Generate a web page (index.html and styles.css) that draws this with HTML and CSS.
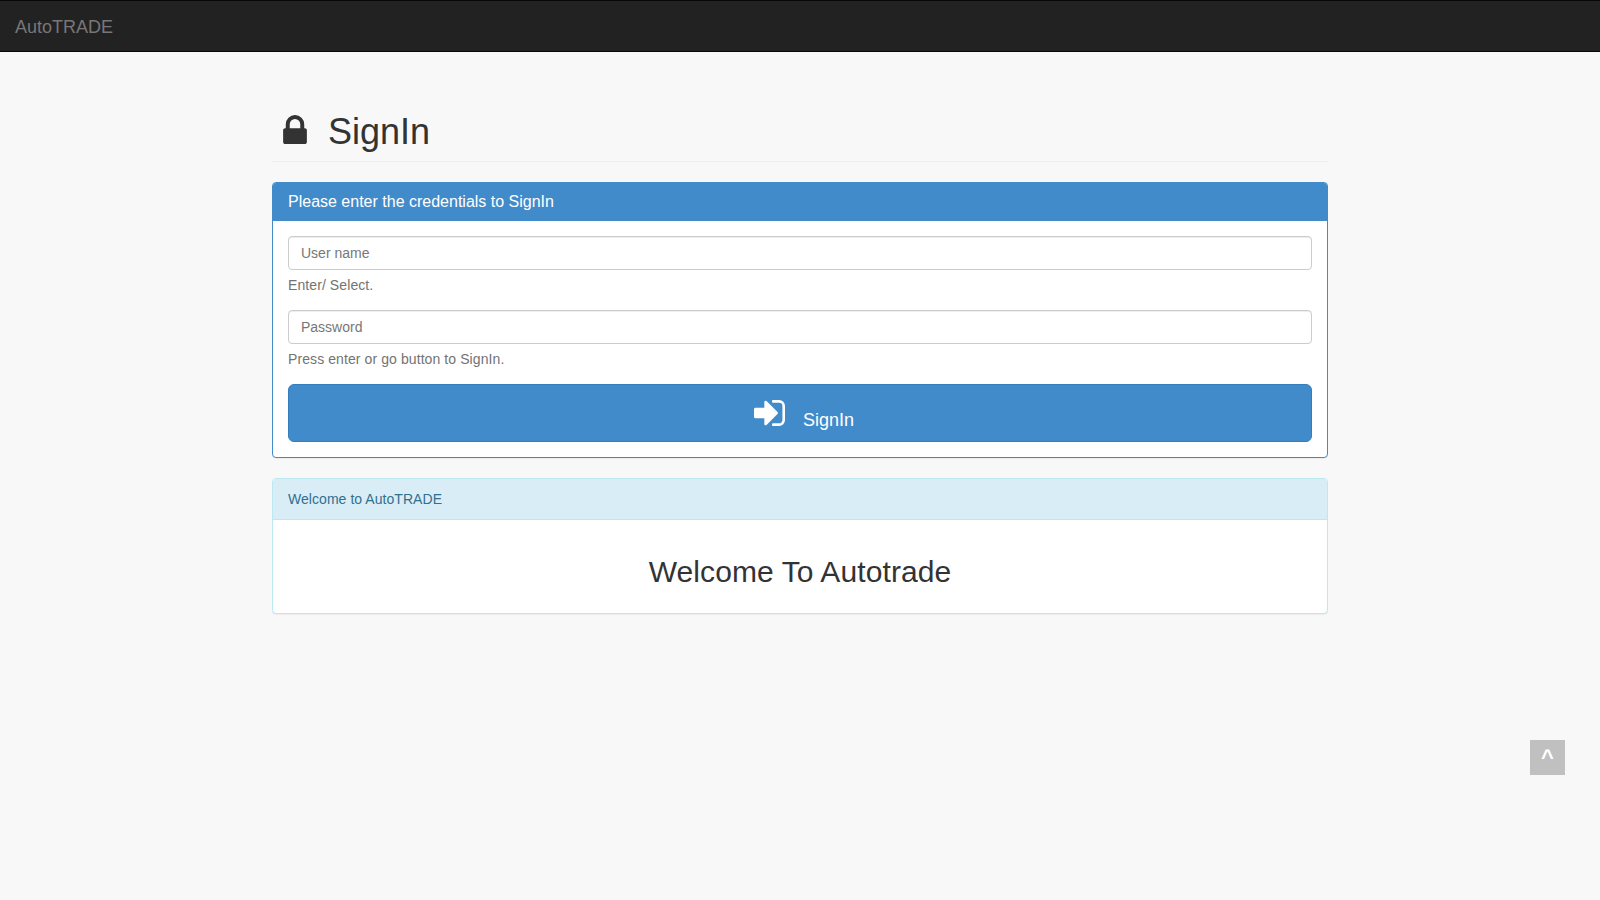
FILE: index.html
```html
<!DOCTYPE html>
<html lang="en">
<head>
<meta charset="utf-8">
<title>AutoTRADE</title>
<link rel="stylesheet" href="styles.css">
</head>
<body>
<nav class="navbar"><a class="navbar-brand">AutoTRADE</a></nav>
<main class="container">
  <h1 class="page-header">
    <svg class="icon-lock" viewBox="320 128 1152 1408"><path d="M640 768h512v-192q0-106-75-181t-181-75-181 75-75 181v192zm832 96v576q0 40-28 68t-68 28h-960q-40 0-68-28t-28-68v-576q0-40 28-68t68-28h32v-192q0-184 132-316t316-132 316 132 132 316v192h32q40 0 68 28t28 68z"/></svg>
    <span>SignIn</span>
  </h1>
  <section class="panel panel-primary">
    <h3 class="panel-heading">Please enter the credentials to SignIn</h3>
    <form class="panel-body">
      <div class="form-group">
        <input class="form-control" type="text" placeholder="User name">
        <span class="help-block">Enter/ Select.</span>
      </div>
      <div class="form-group">
        <input class="form-control" type="password" placeholder="Password">
        <span class="help-block">Press enter or go button to SignIn.</span>
      </div>
      <button class="btn" type="button">
        <svg class="icon-sign-in" viewBox="128 256 1536 1280"><path d="M1312 896q0 26-19 45l-544 544q-19 19-45 19t-45-19-19-45v-288h-448q-26 0-45-19t-19-45v-384q0-26 19-45t45-19h448v-288q0-26 19-45t45-19 45 19l544 544q19 19 19 45zm352-352v704q0 119-84.500 203.500t-203.500 84.500h-320q-13 0-22.500-9.500t-9.500-22.500q0-4-1-20t-.5-26.500 3-23.500 10-19.500 20.500-6.500h320q66 0 113-47t47-113v-704q0-66-47-113t-113-47h-312l-11.500-1-11.500-3-8-5.500-7-9-2-13.500q0-4-1-20t-.5-26.500 3-23.500 10-19.500 20.500-6.500h320q119 0 203.500 84.500t84.500 203.500z"/></svg>
        <span class="btn-label">SignIn</span>
      </button>
    </form>
  </section>
  <section class="panel panel-info">
    <div class="panel-heading">Welcome to AutoTRADE</div>
    <div class="panel-body"><h2 class="welcome">Welcome To Autotrade</h2></div>
  </section>
</main>
<a class="scroll-top">^</a>
</body>
</html>
```

FILE: styles.css
```css
* { box-sizing: border-box; }
body {
  margin: 0;
  background: #f8f8f8;
  color: #333;
  font: 14px/20px "Liberation Sans", Arial, sans-serif;
}
.navbar {
  height: 52px;
  padding: 16px 15px 14px;
  background: #222;
  border: solid #080808;
  border-width: 1px 0;
}
.navbar-brand { color: #777; font-size: 18px; display: block; }
.container { width: 1056px; margin: 0 auto; padding-top: 60px; }
.page-header {
  display: flex;
  align-items: flex-start;
  height: 50px;
  margin: 0 0 20px;
  padding-left: 11px;
  border-bottom: 1px solid #eee;
  font-size: 36px;
  font-weight: 500;
  line-height: 39px;
  gap: 21px;
}
.icon-lock { width: 24px; height: 29px; margin-top: 3px; fill: #333; }
.panel {
  margin-bottom: 20px;
  background: #fff;
  border: 1px solid;
  border-radius: 4px;
  box-shadow: 0 1px 1px rgba(0, 0, 0, .05);
}
.panel-heading {
  margin: 0;
  padding: 10px 15px;
  border-bottom: 1px solid;
  border-radius: 3px 3px 0 0;
}
.panel-body { padding: 15px; }
.panel-primary { border-color: #428bca; }
.panel-primary .panel-heading {
  background: #428bca;
  border-color: #428bca;
  color: #fff;
  font-size: 16px;
  font-weight: 500;
  line-height: 17px;
}
.panel-info { border-color: #bce8f1; }
.panel-info .panel-heading {
  background: #d9edf7;
  border-color: #bce8f1;
  color: #31708f;
  letter-spacing: .05px;
}
.form-group { margin-bottom: 15px; }
.form-control {
  display: block;
  width: 100%;
  height: 34px;
  padding: 6px 12px;
  background: #fff;
  border: 1px solid #ccc;
  border-radius: 4px;
  box-shadow: inset 0 1px 1px rgba(0, 0, 0, .075);
  font: inherit;
  color: #555;
}
.form-control::placeholder { color: #777; opacity: 1; }
.help-block { display: block; margin-top: 5px; color: #737373; letter-spacing: .09px; }
.btn {
  display: flex;
  justify-content: center;
  align-items: flex-start;
  gap: 18px;
  width: 100%;
  height: 58px;
  padding: 15px 0 0;
  background: #428bca;
  border: 1px solid #357ebd;
  border-radius: 6px;
  color: #fff;
  font: 18px/24px "Liberation Sans", Arial, sans-serif;
}
.icon-sign-in { width: 31px; height: 26px; fill: #fff; margin-left: 8px; }
.btn-label { margin-top: 8px; }
.welcome {
  margin: 20px 0 10px;
  font-size: 30px;
  font-weight: 500;
  line-height: 33px;
  letter-spacing: .1px;
  text-align: center;
}
.scroll-top {
  position: fixed;
  right: 35px;
  bottom: 125px;
  width: 35px;
  height: 35px;
  background: #c0c0c0;
  color: #fff;
  font-size: 22px;
  font-weight: 700;
  line-height: 35px;
  text-align: center;
}
```
